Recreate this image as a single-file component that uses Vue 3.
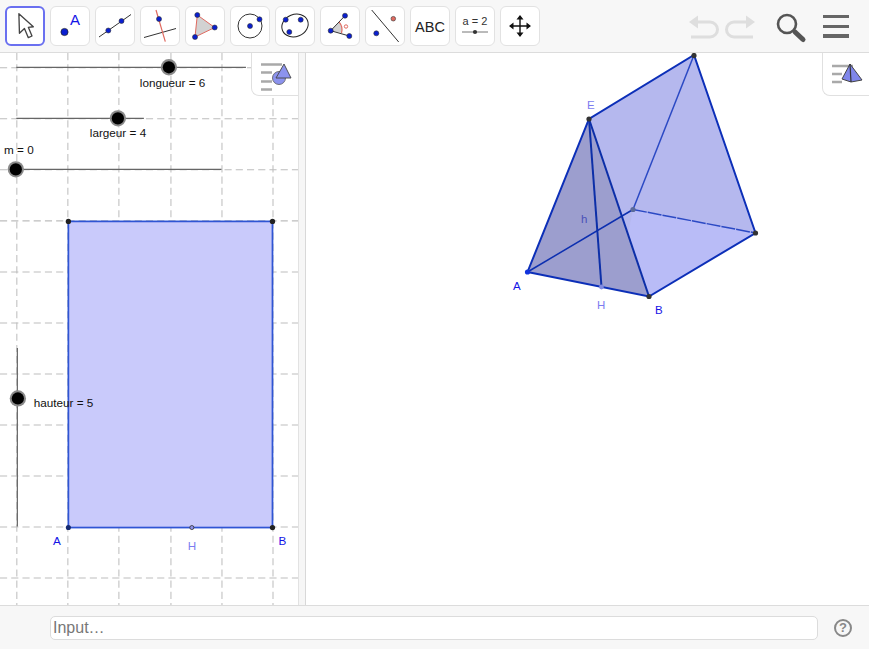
<script setup>
const vLines = [16.5, 66.5, 116.5, 167.5, 217.5, 267.5]
const hLines = [67.5, 117.5, 167.5, 217.5, 267.5, 317.5, 367.5, 417.5, 467.5, 517.5, 567.5]
const sliders = [
  { x1: 16, y1: 67, x2: 241, y2: 67, tx: 165.5, ty: 67 },
  { x1: 16, y1: 117, x2: 141, y2: 117, tx: 115.5, ty: 117 },
  { x1: 15, y1: 167, x2: 217, y2: 167, tx: 15.5, ty: 167 },
  { x1: 17, y1: 342, x2: 17, y2: 517, tx: 17.5, ty: 391.5 }
]
const sliderLabels = [
  { t: 'longueur = 6', x: 137, y: 86 },
  { t: 'largeur = 4', x: 88, y: 135 },
  { t: 'm = 0', x: 4, y: 152 },
  { t: 'hauteur = 5', x: 33, y: 400 }
]
</script>

<template>
  <div class="app">
    <header class="toolbar">
      <div class="tools">
        <button class="tool selected">
          <svg viewBox="0 0 36 36" class="ic"><path d="M12.5 7 L13 24.5 L17.5 20.3 L21 28.5 L24.3 27 L21 19.2 L25.5 18.7 Z" fill="#fff" stroke="#444" stroke-width="1.2" stroke-linejoin="round"/></svg>
        </button>
        <button class="tool">
          <svg viewBox="0 0 40 40" class="ic"><circle cx="14.5" cy="26" r="3.6" fill="#0a1fd0" stroke="#222" stroke-width=".7"/><text x="20" y="19" class="ta">A</text></svg>
        </button>
        <button class="tool">
          <svg viewBox="0 0 40 40" class="ic"><line x1="4" y1="31" x2="36" y2="8.5" class="k"/><circle cx="13.3" cy="24.5" r="2.5" class="p"/><circle cx="26.5" cy="15" r="2.5" class="p"/></svg>
        </button>
        <button class="tool">
          <svg viewBox="0 0 40 40" class="ic"><line x1="4" y1="31.5" x2="36" y2="22.5" class="k"/><line x1="16" y1="4" x2="25.3" y2="35.7" class="r"/><circle cx="19" cy="13" r="2.5" class="p"/></svg>
        </button>
        <button class="tool">
          <svg viewBox="0 0 40 40" class="ic"><polygon points="12.3,9 29.7,21.5 10,31" fill="#d2d2d2" stroke="#e06a60" stroke-width="1"/><circle cx="12.3" cy="9" r="2.5" class="p"/><circle cx="29.7" cy="21.5" r="2.5" class="p"/><circle cx="10" cy="31" r="2.5" class="p"/></svg>
        </button>
        <button class="tool">
          <svg viewBox="0 0 40 40" class="ic"><circle cx="20" cy="20" r="12" fill="none" stroke="#333" stroke-width="1"/><circle cx="20" cy="20" r="2.5" class="p"/><circle cx="29.5" cy="13.3" r="2.5" class="p"/></svg>
        </button>
        <button class="tool">
          <svg viewBox="0 0 40 40" class="ic"><ellipse cx="20" cy="19.5" rx="13.5" ry="11" transform="rotate(-22 20 19.5)" fill="none" stroke="#222" stroke-width="1"/><circle cx="10.7" cy="13.7" r="2.5" class="p"/><circle cx="25.7" cy="13.7" r="2.5" class="p"/><circle cx="14.3" cy="26" r="2.5" class="p"/></svg>
        </button>
        <button class="tool">
          <svg viewBox="0 0 40 40" class="ic"><path d="M10.7 24.7 L19 15.8 A12 12 0 0 1 21.5 27 Z" fill="#d2d2d2"/><path d="M19 15.8 A12 12 0 0 1 21.5 27" fill="none" stroke="#e06a60" stroke-width="1.2"/><polyline points="25,9.7 10.7,24.7 29.3,30" fill="none" stroke="#333" stroke-width="1"/><circle cx="10.7" cy="24.7" r="2.5" class="p"/><circle cx="25" cy="9.7" r="2.5" class="p"/><circle cx="29.3" cy="30" r="2.5" class="p"/><circle cx="26" cy="20.5" r="1.7" fill="none" stroke="#e06a60" stroke-width="1"/></svg>
        </button>
        <button class="tool">
          <svg viewBox="0 0 40 40" class="ic"><line x1="6.7" y1="4" x2="33.7" y2="36" class="k"/><circle cx="11.3" cy="27.3" r="2.5" class="p"/><circle cx="28.3" cy="12.7" r="2.3" fill="#e06a60" stroke="#333" stroke-width=".6"/></svg>
        </button>
        <button class="tool">
          <svg viewBox="0 0 40 40" class="ic"><text x="20" y="25.5" class="abc">ABC</text></svg>
        </button>
        <button class="tool">
          <svg viewBox="0 0 40 40" class="ic"><text x="20" y="19" class="a2">a = 2</text><line x1="7" y1="26" x2="33" y2="26" stroke="#777" stroke-width="1"/><circle cx="20" cy="26" r="2.1" fill="#333"/></svg>
        </button>
        <button class="tool">
          <svg viewBox="0 0 40 40" class="ic"><path d="M20 10 V30 M10 20 H30" stroke="#111" stroke-width="1.4"/><path d="M20 9 L23.5 13.5 H16.5 Z M20 31 L23.5 26.5 H16.5 Z M9 20 L13.5 16.5 V23.5 Z M31 20 L26.5 16.5 V23.5 Z" fill="#111"/></svg>
        </button>
      </div>
      <div class="actions">
        <svg class="undo" viewBox="0 0 32 32"><path d="M6 10 H22 A7 7 0 0 1 22 25 H3" fill="none" stroke="#dedede" stroke-width="3"/><path d="M1 10 L10 3.5 V16.5 Z" fill="#dedede"/></svg>
        <svg class="undo" viewBox="0 0 32 32"><path d="M26 10 H10 A7 7 0 0 0 10 25 H29" fill="none" stroke="#dedede" stroke-width="3"/><path d="M31 10 L22 3.5 V16.5 Z" fill="#dedede"/></svg>
        <svg class="search" viewBox="0 0 32 32"><circle cx="12" cy="12" r="9" fill="none" stroke="#555" stroke-width="2.6"/><line x1="20" y1="20" x2="28" y2="27.5" stroke="#555" stroke-width="5" stroke-linecap="round"/></svg>
        <div class="burger"><span></span><span></span><span></span></div>
      </div>
    </header>

    <main class="views">
      <section class="view left">
        <svg class="canvas" viewBox="0 53 292 552" preserveAspectRatio="xMinYMin slice">
          <line v-for="x in vLines" :key="'v' + x" :x1="x" :y1="53" :x2="x" :y2="605" class="grid"/>
          <line v-for="y in hLines" :key="'h' + y" x1="0" :y1="y" x2="292" :y2="y" class="grid"/>
          <rect x="67" y="218" width="200" height="300" fill="#c9cafb" stroke="#2f55d4" stroke-width="1.7"/>
          <g v-for="(s, i) in sliders" :key="i">
            <line :x1="s.x1" :y1="s.y1" :x2="s.x2" :y2="s.y2" stroke="#666" stroke-width="1.2"/>
            <circle :cx="s.tx" :cy="s.ty" r="8" fill="#8a8a8a"/>
            <circle :cx="s.tx" :cy="s.ty" r="6" fill="#000"/>
          </g>
          <text v-for="l in sliderLabels" :key="l.t" :x="l.x" :y="l.y" class="lbl">{{ l.t }}</text>
          <circle cx="67" cy="518" r="2.5" fill="#152a70"/>
          <circle cx="267" cy="518" r="2.6" fill="#222"/>
          <circle cx="67" cy="218" r="2.6" fill="#222"/>
          <circle cx="267" cy="218" r="2.6" fill="#222"/>
          <circle cx="188" cy="518" r="2" fill="#8c8fe8" stroke="#333" stroke-width=".8"/>
          <text x="52" y="535" class="blue">A</text>
          <text x="273" y="535" class="blue">B</text>
          <text x="184" y="540" class="pale">H</text>
        </svg>
        <button class="style-btn">
          <svg viewBox="0 0 46 42" class="style-ic">
            <path d="M9 12 H30 M9 20 H20 M9 29 H20 M9 37 H20" transform="translate(0 -.5)" stroke="#a9a9a9" stroke-width="2.4"/>
            <circle cx="27" cy="25" r="6.5" fill="#8c93ee" stroke="#555" stroke-width=".8"/>
            <polygon points="32,11 39,25 24,25" fill="#8c93ee" stroke="#444" stroke-width=".9"/>
          </svg>
        </button>
      </section>

      <div class="splitter"></div>

      <section class="view right">
        <svg class="canvas" viewBox="306 53 563 552" preserveAspectRatio="xMinYMin slice">
          <polygon points="589,119 694,55 755.5,233 649,296.5" fill="#b5b8ee"/>
          <polygon points="633,209.5 755.5,233 649,296.5 618,283" fill="#b9bcf7"/>
          <polygon points="527.5,272 589,119 649,296.5" fill="#9c9ece"/>
          <line x1="633" y1="209.5" x2="694" y2="55" stroke="#2b49c4" stroke-width="1.5"/>
          <line x1="633" y1="209.5" x2="755.5" y2="233" stroke="#2b49c4" stroke-width="1.5" stroke-dasharray="14 1"/>
          <line x1="527.5" y1="272" x2="633" y2="209.5" stroke="#0c2fb0" stroke-width="1.5"/>
          <line x1="589" y1="119" x2="601.5" y2="287" stroke="#0c2fa8" stroke-width="2"/>
          <polyline points="527.5,272 589,119 694,55 755.5,233 649,296.5 527.5,272" fill="none" stroke="#0c2fb8" stroke-width="2"/>
          <line x1="589" y1="119" x2="649" y2="296.5" stroke="#0c2fa8" stroke-width="2"/>
          <circle cx="589" cy="119" r="2.6" fill="#333"/>
          <circle cx="694" cy="55.5" r="2.6" fill="#333"/>
          <circle cx="755.5" cy="233" r="2.6" fill="#333"/>
          <circle cx="649" cy="296.5" r="2.6" fill="#333"/>
          <circle cx="633" cy="209.5" r="2.6" fill="#5a6a9a"/>
          <circle cx="527.5" cy="272" r="2.6" fill="#1133dd"/>
          <circle cx="601.5" cy="287" r="2.4" fill="#7f8ae0"/>
          <text x="587" y="109" class="pale">E</text>
          <text x="581" y="223" class="dim">h</text>
          <text x="513" y="290" class="blue">A</text>
          <text x="597" y="309" class="pale">H</text>
          <text x="655" y="314" class="blue">B</text>
        </svg>
        <button class="style-btn wide">
          <svg viewBox="0 0 46 42" class="style-ic">
            <path d="M9 13 H30 M9 21 H19 M9 29 H19" stroke="#a9a9a9" stroke-width="2.4"/>
            <polygon points="27,11 39,27 28,29 19,26" fill="#7f86ea" stroke="#444" stroke-width="1"/>
            <line x1="27" y1="11" x2="28" y2="29" stroke="#333" stroke-width="1.2"/>
          </svg>
        </button>
      </section>
    </main>

    <footer class="bottom">
      <div class="input">Input…</div>
      <div class="help">?</div>
    </footer>
  </div>
</template>

<style>
html, body { margin: 0; background: #fff; }
</style>

<style scoped>
.app {
  width: 869px;
  height: 649px;
  display: flex;
  flex-direction: column;
  font-family: "Liberation Sans", Arial, sans-serif;
}
.toolbar {
  height: 52px;
  flex: none;
  display: flex;
  justify-content: space-between;
  background: #f7f7f7;
  border-bottom: 1px solid #dcdcdc;
}
.tools {
  display: flex;
  gap: 5px;
  padding: 6px 0 0 5px;
}
.tool {
  width: 40px;
  height: 40px;
  padding: 0;
  box-sizing: border-box;
  background: #fff;
  border: 1px solid #e2e2e2;
  border-radius: 6px;
  display: flex;
}
.tool.selected {
  border: 2px solid #6a70f0;
}
.ic { width: 100%; height: 100%; display: block; margin: -1px; flex: none; width: 40px; height: 40px; }
.selected .ic { margin: -2px; }
.k { stroke: #333; stroke-width: 1; }
.r { stroke: #e06a60; stroke-width: 1.2; }
.p { fill: #0a1fd0; stroke: #333; stroke-width: .6; }
.ta { fill: #1414e6; font-size: 15px; font-family: "Liberation Sans", sans-serif; }
.abc { fill: #222; font-size: 14.5px; text-anchor: middle; font-family: "Liberation Sans", sans-serif; }
.a2 { fill: #333; font-size: 11px; text-anchor: middle; font-family: "Liberation Sans", sans-serif; }
.actions {
  display: flex;
  align-items: flex-start;
  padding-right: 20px;
}
.undo { width: 32px; height: 32px; margin-top: 12px; margin-right: 5px; }
.undo:first-child { margin-right: 4px; }
.search { width: 32px; height: 32px; margin: 12px 0 0 14px; }
.burger {
  width: 26px;
  margin: 15px 0 0 16px;
  display: flex;
  flex-direction: column;
  gap: 6.5px;
}
.burger span { display: block; height: 3.2px; background: #666; }
.views { flex: 1; display: flex; min-height: 0; }
.view { position: relative; background: #fff; overflow: hidden; }
.left { width: 298px; flex: none; }
.right { flex: 1; }
.canvas { display: block; width: 100%; height: 100%; }
.splitter {
  width: 6px;
  flex: none;
  background: #f6f6f6;
  border-left: 1px solid #e2e2e2;
  border-right: 1px solid #d8d8d8;
}
.grid { stroke: #bdbdbd; stroke-width: 1; stroke-dasharray: 7 4; }
.lbl { font-size: 11.5px; fill: #111; }
.blue { font-size: 11.5px; fill: #1414e6; }
.pale { font-size: 11.5px; fill: #7c7cf0; }
.dim { font-size: 11.5px; fill: #4a50b8; }
.style-btn {
  position: absolute;
  top: 0;
  right: 0;
  width: 46px;
  height: 42px;
  padding: 0;
  background: #fff;
  box-sizing: content-box;
  border: 0;
  border-left: 1px solid #e0e0e0;
  border-bottom: 1px solid #e0e0e0;
  border-bottom-left-radius: 8px;
}
.style-ic { display: block; width: 46px; height: 42px; }
.bottom {
  height: 43px;
  flex: none;
  display: flex;
  align-items: center;
  background: #f7f7f7;
  border-top: 1px solid #dcdcdc;
  padding-left: 50px;
}
.input {
  width: 768px;
  height: 24px;
  box-sizing: border-box;
  background: #fff;
  border: 1px solid #dcdcdc;
  border-radius: 5px;
  padding-left: 2px;
  color: #777;
  font-size: 16px;
  line-height: 22px;
}
.help {
  width: 18px;
  height: 18px;
  box-sizing: border-box;
  margin-left: 16px;
  border: 2px solid #888;
  border-radius: 50%;
  color: #888;
  font-size: 13px;
  font-weight: bold;
  line-height: 14px;
  text-align: center;
}
</style>
